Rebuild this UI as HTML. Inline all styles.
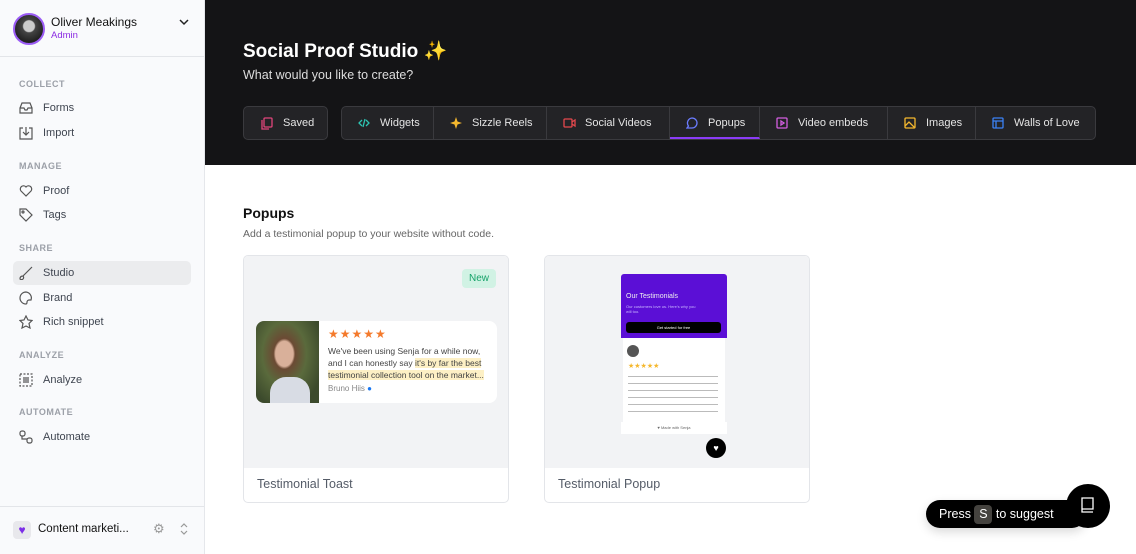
<!DOCTYPE html>
<html><head><meta charset="utf-8"><style>
*{box-sizing:border-box;margin:0;padding:0}
body{width:1136px;height:554px;overflow:hidden;font-family:"Liberation Sans",sans-serif;background:#fff;position:relative}
.sb{position:absolute;left:0;top:0;width:205px;height:554px;background:#f9fafc;border-right:1px solid #e5e7eb}
.user{height:57px;border-bottom:1px solid #e3e5e9;position:relative}
.av{position:absolute;left:13px;top:13px;width:32px;height:32px;border-radius:50%;border:2px solid #9b5cf5;background:radial-gradient(circle at 50% 40%,#ccc 0 25%,#444 30%,#222 70%)}
.sec{position:absolute;left:19px;font-size:9px;font-weight:bold;color:#9ca0a8;letter-spacing:.5px}
.it{position:absolute;left:13px;width:178px;height:24px;font-size:11px;color:#3f4550;padding-left:30px;line-height:24px}
.it svg{position:absolute;left:6px;top:5px}
.hd{position:absolute;left:205px;top:0;right:0;height:165px;background:#141416}
.tab{position:absolute;top:106px;height:34px;color:#e5e5e5;font-size:11px;line-height:33px}
.g{position:absolute;top:106px;left:341px;width:755px;height:34px;border:1px solid #3a3a3e;border-radius:5px;background:#232326}
.t{position:absolute;top:0;height:32px;border-right:1px solid #3a3a3e;color:#e5e5e5;font-size:11px;line-height:32px;padding-left:38px}
.t svg{position:absolute;left:16px;top:10px}
.card{position:absolute;top:255px;width:266px;height:248px;border:1px solid #e3e5e9;border-radius:5px;overflow:hidden;background:#fff}
.pv{height:212px;background:#f2f3f5;position:relative}
.cl{position:absolute;left:13px;top:221px;font-size:12.5px;color:#555c68}
</style></head><body>
<div class="sb">
 <div class="user"><div class="av"></div>
  <div style="position:absolute;left:51px;top:15px;font-size:12px;color:#111">Oliver Meakings</div>
  <div style="position:absolute;left:51px;top:30px;font-size:9.5px;color:#8b2be2">Admin</div>
  <svg style="position:absolute;left:179px;top:18px" width="10" height="8"><path d="M1 2l4 4 4-4" stroke="#222" stroke-width="1.5" fill="none"/></svg>
 </div>
 <div class="sec" style="top:79px">COLLECT</div>
 <div class="it" style="top:96px"><svg width="14" height="14" fill="none" stroke="#555" stroke-width="1.2"><path d="M1 7l2-5h8l2 5v5H1z M1 7h4l1 2h2l1-2h4"/></svg>Forms</div>
 <div class="it" style="top:121px"><svg width="14" height="14" fill="none" stroke="#555" stroke-width="1.2"><path d="M4 2H1v11h12V2h-3M7 1v8M4 6l3 3 3-3"/></svg>Import</div>
 <div class="sec" style="top:161px">MANAGE</div>
 <div class="it" style="top:179px"><svg width="14" height="14" fill="none" stroke="#555" stroke-width="1.2"><path d="M7 12L2 7a3 3 0 015-4 3 3 0 015 4z"/></svg>Proof</div>
 <div class="it" style="top:203px"><svg width="14" height="14" fill="none" stroke="#555" stroke-width="1.2"><path d="M1 1h6l6 6-6 6-6-6z"/><circle cx="4" cy="4" r="1"/></svg>Tags</div>
 <div class="sec" style="top:243px">SHARE</div>
 <div class="it" style="top:261px;background:#ebecee;border-radius:5px"><svg width="14" height="14" fill="none" stroke="#555" stroke-width="1.2"><path d="M13 1L6 8M6 8l-2 2a2 2 0 01-3 3c0-2 1-3 3-3"/></svg>Studio</div>
 <div class="it" style="top:286px"><svg width="14" height="14" fill="none" stroke="#555" stroke-width="1.2"><path d="M7 1a6 6 0 100 12c1 0 1-1 1-2s1-2 2-2h2a6 6 0 00-5-8z"/></svg>Brand</div>
 <div class="it" style="top:310px"><svg width="14" height="14" fill="none" stroke="#555" stroke-width="1.2"><path d="M7 1l2 4 4 .5-3 3 1 4.5-4-2-4 2 1-4.5-3-3 4-.5z"/></svg>Rich snippet</div>
 <div class="sec" style="top:350px">ANALYZE</div>
 <div class="it" style="top:368px"><svg width="14" height="14" fill="none" stroke="#555" stroke-width="1.2" stroke-dasharray="2 1.5"><rect x="1" y="1" width="12" height="12"/><path d="M4 5h6M4 7h6M4 9h6" stroke-dasharray="none"/></svg>Analyze</div>
 <div class="sec" style="top:407px">AUTOMATE</div>
 <div class="it" style="top:425px"><svg width="14" height="14" fill="none" stroke="#555" stroke-width="1.2"><rect x="1" y="1" width="5" height="5" rx="2"/><rect x="8" y="8" width="5" height="5" rx="2"/><path d="M3 6v3h5"/></svg>Automate</div>
 <div style="position:absolute;left:0;top:506px;width:204px;border-top:1px solid #e3e5e9"></div>
 <div style="position:absolute;left:13px;top:521px;width:18px;height:18px;border-radius:4px;background:#e8e8ec;text-align:center;font-size:12px;line-height:18px;color:#7c2ee8">♥</div>
 <div style="position:absolute;left:38px;top:523px;font-size:11.5px;color:#111">Content marketi...</div>
 <div style="position:absolute;left:153px;top:521px;font-size:13px;color:#999">⚙</div>
 <svg style="position:absolute;left:179px;top:522px" width="10" height="14" fill="none" stroke="#999" stroke-width="1.2"><path d="M2 5l3-3 3 3M2 9l3 3 3-3"/></svg>
</div>
<div class="hd"></div>
<div style="position:absolute;left:243px;top:39px;font-size:19px;font-weight:bold;color:#fff">Social Proof Studio <span style="color:#f6c32c">✨</span></div>
<div style="position:absolute;left:243px;top:68px;font-size:12.5px;color:#ddd">What would you like to create?</div>
<div class="tab" style="left:243px;width:85px;border:1px solid #3a3a3e;border-radius:5px;background:#232326;padding-left:39px">
 <svg style="position:absolute;left:17px;top:10px" width="12" height="13" fill="none" stroke="#e0457b" stroke-width="1.3"><rect x="3" y="1" width="8" height="9" rx="1"/><path d="M1 3v9h7"/></svg>Saved</div>
<div class="g">
 <div class="t" style="left:0;width:92px"><svg width="12" height="12" fill="none" stroke="#2dc4b2" stroke-width="1.3"><path d="M4 3L1 6l3 3M8 3l3 3-3 3M7 2L5 10"/></svg>Widgets</div>
 <div class="t" style="left:92px;width:113px"><svg width="12" height="12" fill="#f5b82e"><path d="M6 0l1.5 4.5L12 6 7.5 7.5 6 12 4.5 7.5 0 6l4.5-1.5z"/></svg>Sizzle Reels</div>
 <div class="t" style="left:205px;width:123px"><svg width="13" height="12" fill="none" stroke="#e5484d" stroke-width="1.3"><rect x="1" y="2" width="8" height="8" rx="1"/><path d="M9 5l3-2v6l-3-2"/></svg>Social Videos</div>
 <div class="t" style="left:328px;width:90px;border-bottom:2px solid #8b3cf7"><svg width="12" height="12" fill="none" stroke="#6b7cff" stroke-width="1.3"><path d="M6 1a5 5 0 110 10H1l1.5-2A5 5 0 016 1z"/></svg>Popups</div>
 <div class="t" style="left:418px;width:128px"><svg width="12" height="12" fill="none" stroke="#d35ee0" stroke-width="1.3"><rect x="1" y="1" width="10" height="10" rx="1"/><path d="M5 4l3 2-3 2z"/></svg>Video embeds</div>
 <div class="t" style="left:546px;width:88px"><svg width="12" height="12" fill="none" stroke="#f5b82e" stroke-width="1.3"><rect x="1" y="1" width="10" height="10" rx="1"/><path d="M1 9l4-4 6 6"/></svg>Images</div>
 <div class="t" style="left:634px;width:120px;border-right:none"><svg width="12" height="12" fill="none" stroke="#3b82f6" stroke-width="1.3"><rect x="1" y="1" width="10" height="10" rx="1"/><path d="M1 4h10M4 4v7"/></svg>Walls of Love</div>
</div>
<div style="position:absolute;left:243px;top:205px;font-size:14px;font-weight:bold;color:#111">Popups</div>
<div style="position:absolute;left:243px;top:228px;font-size:10.5px;color:#666">Add a testimonial popup to your website without code.</div>
<div class="card" style="left:243px">
 <div class="pv">
  <div style="position:absolute;left:218px;top:13px;width:34px;height:19px;border-radius:4px;background:#d1f2e4;color:#17a36a;font-size:10px;text-align:center;line-height:19px">New</div>
  <div style="position:absolute;left:12px;top:65px;width:241px;height:82px;background:#fff;border-radius:8px;overflow:hidden">
   <div style="position:absolute;left:0;top:0;width:63px;height:82px;background:radial-gradient(ellipse at 45% 40%,#d9b09a 0 18%,#6b4a34 22%,#5a6a3c 45%,#3c4a2c 80%)"><div style="position:absolute;left:14px;top:56px;width:40px;height:30px;border-radius:16px 16px 0 0;background:#d8dce4"></div></div>
   <div style="position:absolute;left:72px;top:6px;color:#f47a2c;font-size:12px;letter-spacing:1px">★★★★★</div>
   <div style="position:absolute;left:72px;top:24px;font-size:8.5px;line-height:12px;color:#444;width:165px">We've been using Senja for a while now, and I can honestly say <span style="background:#fdf0c5">it's by far the best testimonial collection tool on the market...</span></div>
   <div style="position:absolute;left:72px;top:63px;font-size:8px;color:#888">Bruno Hiis <span style="color:#1877f2">●</span></div>
  </div>
 </div>
 <div class="cl">Testimonial Toast</div>
</div>
<div class="card" style="left:544px">
 <div class="pv">
  <div style="position:absolute;left:76px;top:18px;width:106px;height:64px;background:#5b0fd6;border-radius:3px 3px 0 0">
   <div style="position:absolute;left:5px;top:19px;font-size:7px;color:#eee">Our Testimonials</div>
   <div style="position:absolute;left:5px;top:30px;font-size:4px;color:#c8b6ff;width:70px">Our customers love us. Here's why you will too.</div>
   <div style="position:absolute;left:5px;top:48px;width:95px;height:11px;background:#000;border-radius:3px;color:#fff;font-size:4px;text-align:center;line-height:11px">Get started for free</div>
  </div>
  <div style="position:absolute;left:78px;top:82px;width:102px;height:96px;background:#fff">
   <div style="position:absolute;left:4px;top:7px;width:12px;height:12px;border-radius:50%;background:#555"></div>
   <div style="position:absolute;left:5px;top:24px;color:#f5b82e;font-size:7px">★★★★★</div>
   <div style="position:absolute;left:5px;top:35px;width:90px;height:45px;background:repeating-linear-gradient(#fff 0 3px,#bbb 3px 4px,#fff 4px 7px)"></div>
  </div>
  <div style="position:absolute;left:76px;top:166px;width:106px;height:12px;background:#fff;font-size:4px;color:#666;text-align:center;line-height:12px">♥ Made with Senja</div>
  <div style="position:absolute;left:161px;top:182px;width:20px;height:20px;border-radius:50%;background:#000;color:#fff;font-size:9px;text-align:center;line-height:20px">♥</div>
 </div>
 <div class="cl">Testimonial Popup</div>
</div>
<div style="position:absolute;left:926px;top:500px;width:160px;height:28px;border-radius:14px;background:#000;color:#fff;font-size:12.5px;line-height:28px;padding-left:13px;box-shadow:0 4px 10px rgba(0,0,0,.15)">Press <span style="display:inline-block;background:#45433f;border-radius:4px;width:18px;height:19px;text-align:center;line-height:19px">S</span> to suggest</div>
<div style="position:absolute;left:1066px;top:484px;width:44px;height:44px;border-radius:50%;background:#000">
 <svg style="position:absolute;left:14px;top:12px" width="16" height="18" fill="none" stroke="#fff" stroke-width="1.3"><path d="M2 2h11v11H2zM2 13v3h11M2 2v14"/></svg>
</div>
</body></html>
